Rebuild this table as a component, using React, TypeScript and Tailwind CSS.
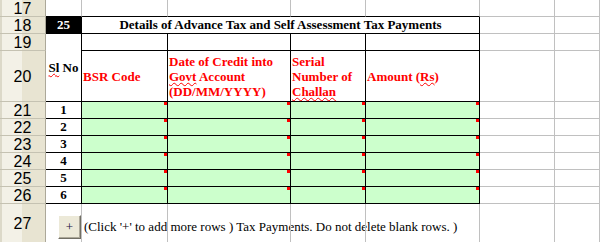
import React from 'react';

const serif = { fontFamily: '"Liberation Serif", "Times New Roman", serif' };

const grid = 'border-r border-b border-[#c0c0c0]';
const dark = 'border-r border-b border-black';

function RowHead({ n, last = false }: { n: number; last?: boolean }) {
  return (
    <div
      className={`flex items-center justify-center pt-[2px] border-r border-r-[#aca899] ${
        last ? '' : 'border-b border-b-[#c5c2b2]'
      } bg-[linear-gradient(90deg,#dcd9c9_0px,#dcd9c9_2px,#f3f1e7_2px,#f3f1e7_22px,#e8e4d2_22px)] text-[16px] leading-none text-black`}
      style={{ fontFamily: '"Liberation Sans", Arial, sans-serif' }}
    >
      {n}
    </div>
  );
}

function Squiggle({ children }: { children: React.ReactNode }) {
  return (
    <span className="underline decoration-wavy decoration-[#ff0000] decoration-1 underline-offset-1">
      {children}
    </span>
  );
}

function DataCell() {
  return (
    <div className={`relative bg-[#ccffcc] ${dark}`}>
      <span className="absolute top-0 right-0 w-[3px] h-[3px] bg-[#ff0000]" />
    </div>
  );
}

export default function App() {
  const rows = [1, 2, 3, 4, 5, 6];

  return (
    <div className="w-[600px] h-[242px] overflow-hidden bg-white" style={serif}>
      <div className="grid grid-cols-[46px_36px_86px_123px_75px_114px_75px_1fr] grid-rows-[17px_17px_17px_51px_repeat(6,17px)_38px]">
        {/* row 17 */}
        <RowHead n={17} />
        <div className="border-r border-b border-r-[#c0c0c0] border-b-black" />
        <div className="border-r border-b border-r-[#c0c0c0] border-b-black" />
        <div className="border-r border-b border-r-[#c0c0c0] border-b-black" />
        <div className="border-r border-b border-r-[#c0c0c0] border-b-black" />
        <div className="border-r border-b border-r-[#c0c0c0] border-b-black" />
        <div className={grid} />
        <div className={grid} />

        {/* row 18 */}
        <RowHead n={18} />
        <div className={`flex items-center justify-center bg-black text-white font-bold text-[13px] ${dark}`}>
          25
        </div>
        <div className={`col-span-4 flex items-center justify-center font-bold text-[13px] text-black ${dark}`}>
          Details of Advance Tax and Self Assessment Tax Payments
        </div>
        <div className={grid} />
        <div className={grid} />

        {/* row 19 */}
        <RowHead n={19} />
        <div className={`row-span-2 flex items-center justify-center font-bold text-[13px] text-black ${dark}`}>
          <span>
            <Squiggle>Sl</Squiggle> No
          </span>
        </div>
        <div className={dark} />
        <div className={dark} />
        <div className={dark} />
        <div className={dark} />
        <div className={grid} />
        <div className={grid} />

        {/* row 20 */}
        <RowHead n={20} />
        <div className={`flex items-center pl-px font-bold text-[13px] leading-[15px] text-[#ff0000] ${dark}`}>
          BSR Code
        </div>
        <div className={`flex items-center pl-px font-bold text-[13px] leading-[15px] text-[#ff0000] ${dark}`}>
          <div>
            Date of Credit into
            <br />
            <Squiggle>Govt</Squiggle> Account
            <br />
            (DD/MM/YYYY)
          </div>
        </div>
        <div className={`flex items-center pl-px font-bold text-[13px] leading-[15px] text-[#ff0000] ${dark}`}>
          <div>
            Serial
            <br />
            Number of
            <br />
            <Squiggle>Challan</Squiggle>
          </div>
        </div>
        <div className={`flex items-center pl-px font-bold text-[13px] leading-[15px] text-[#ff0000] ${dark}`}>
          <span>
            Amount (<Squiggle>Rs</Squiggle>)
          </span>
        </div>
        <div className={grid} />
        <div className={grid} />

        {/* rows 21-26 */}
        {rows.map((r) => (
          <React.Fragment key={r}>
            <RowHead n={20 + r} />
            <div className={`flex items-center justify-center font-bold text-[13px] text-black ${dark}`}>
              {r}
            </div>
            <DataCell />
            <DataCell />
            <DataCell />
            <DataCell />
            <div className={grid} />
            <div className={grid} />
          </React.Fragment>
        ))}

        {/* row 27 */}
        <RowHead n={27} last />
        <div className="border-r border-[#c0c0c0] pt-[11px] pl-[12px]">
          <div className="flex items-center gap-[3px] whitespace-nowrap">
            <button className="w-[23px] h-[24px] shrink-0 flex items-center justify-center bg-[#ece9d8] border border-t-white border-l-white border-r-[#716f64] border-b-[#716f64] shadow-[inset_-1px_-1px_0_#aca899] text-[13px] text-[#1a1040]">
              +
            </button>
            <span className="text-[13px] text-black">
              (Click '+' to add more rows ) Tax Payments. Do not delete blank rows. )
            </span>
          </div>
        </div>
        <div className="border-r border-[#c0c0c0]" />
        <div className="border-r border-[#c0c0c0]" />
        <div className="border-r border-[#c0c0c0]" />
        <div className="border-r border-[#c0c0c0]" />
        <div className="border-r border-[#c0c0c0]" />
        <div className="border-r border-[#c0c0c0]" />
      </div>
    </div>
  );
}
